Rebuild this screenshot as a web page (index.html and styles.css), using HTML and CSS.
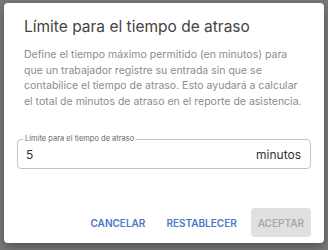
FILE: index.html
```html
<!DOCTYPE html>
<html lang="es">
  <head>
    <meta charset="UTF-8" />
    <meta name="viewport" content="width=device-width, initial-scale=1.0" />
    <title>Límite de atraso</title>
    <link rel="stylesheet" href="styles.css">
  </head>
  <body>
    <div class="backdrop">
      <div class="dialog">
        <h2 class="dialog-title">Límite para el tiempo de atraso</h2>
        <p class="dialog-text">
          Define el tiempo máximo permitido (en minutos) para<br />
          que un trabajador registre su entrada sin que se<br />
          contabilice el tiempo de atraso. Esto ayudará a calcular<br />
          el total de minutos de atraso en el reporte de asistencia.
        </p>
        <fieldset class="field">
          <legend>Límite para el tiempo de atraso</legend>
          <div class="field-row">
            <span class="field-value">5</span>
            <span class="field-unit">minutos</span>
          </div>
        </fieldset>
        <div class="actions">
          <button class="btn">Cancelar</button>
          <button class="btn">Restablecer</button>
          <button class="btn btn-disabled" disabled>Aceptar</button>
        </div>
      </div>
    </div>
  </body>
</html>
```

FILE: styles.css
```css
* {
  padding: 0;
  margin: 0;
  box-sizing: border-box;
}
body {
  background: #7b7b7b;
  font-family: Inter, sans-serif;
}
.backdrop {
  width: 328px;
  height: 250px;
  padding: 3px 4px 0 4px;
}
.dialog {
  width: 320px;
  height: 240px;
  background: #fff;
  border-radius: 4px;
  box-shadow: 0 4px 12px rgba(0, 0, 0, 0.35);
  display: flex;
  flex-direction: column;
}
.dialog-title {
  font-size: 15.5px;
  font-weight: normal;
  line-height: 24px;
  color: #444;
  padding: 12px 20px 0 20px;
}
.dialog-text {
  font-size: 10.5px;
  line-height: 15.5px;
  color: #8c8c8c;
  padding: 8px 20px 0 20px;
  white-space: nowrap;
}
.field {
  margin: 26px 13px 0 13px;
  border: 1px solid #c4c4c4;
  border-radius: 4px;
  padding: 0 9px 0 8px;
  height: 34px;
}
.field legend {
  font-size: 7.5px;
  line-height: 8px;
  color: #666;
  padding: 0 2px;
  margin-left: -3px;
}
.field-row {
  display: flex;
  justify-content: space-between;
  align-items: center;
  height: 22px;
  font-size: 12px;
  color: #333;
}
.actions {
  display: flex;
  justify-content: flex-end;
  align-items: center;
  gap: 7px;
  margin-top: auto;
  padding: 0 13px 6px 13px;
}
.btn {
  font-family: inherit;
  font-size: 10px;
  font-weight: 600;
  text-transform: uppercase;
  color: #4a78c4;
  background: none;
  border: none;
  border-radius: 4px;
  height: 29px;
  padding: 0 7px;
}
.btn-disabled {
  background: #e0e0e0;
  color: #a8a8a8;
}
```
